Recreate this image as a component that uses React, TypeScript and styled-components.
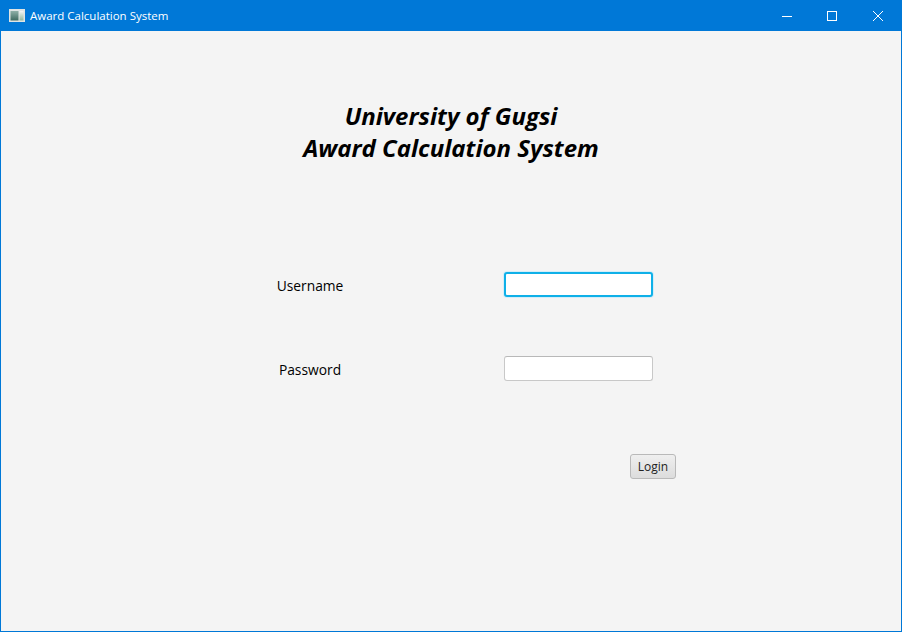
import React from "react";
import styled, { createGlobalStyle } from "styled-components";

const GlobalStyle = createGlobalStyle`
  html, body {
    margin: 0;
    padding: 0;
    height: 100%;
    overflow: hidden;
  }
  * {
    box-sizing: border-box;
  }
`;

const Window = styled.div`
  display: flex;
  flex-direction: column;
  width: 902px;
  height: 632px;
  border: 1px solid #0078d7;
  border-top: none;
  background-color: #f4f4f4;
  font-family: "Open Sans", "Noto Sans", sans-serif;
  color: #000;
`;

const TitleBar = styled.header`
  display: flex;
  align-items: center;
  height: 31px;
  margin: 0 -1px;
  padding: 0 1px 0 9px;
  background-color: #0078d7;
  color: #fff;
`;

const AppIcon = styled.svg`
  width: 16px;
  height: 13px;
  margin-right: 5px;
`;

const WindowTitle = styled.span`
  flex: 1;
  font-size: 11.5px;
  line-height: 31px;
`;

const WindowButton = styled.button`
  display: flex;
  align-items: center;
  justify-content: center;
  width: 46px;
  height: 31px;
  padding: 0;
  border: none;
  background: transparent;
  color: #fff;
`;

const Content = styled.main`
  flex: 1;
  display: flex;
  flex-direction: column;
`;

const Heading = styled.h1`
  margin: 69px 0 0;
  font-size: 24px;
  font-weight: 700;
  font-style: italic;
  line-height: 32px;
  text-align: center;
`;

const LoginForm = styled.form`
  display: grid;
  grid-template-columns: 100px 149px;
  column-gap: 144px;
  row-gap: 59px;
  margin-top: 108px;
  padding-left: 259px;
`;

const FieldLabel = styled.label`
  align-self: center;
  font-size: 13.8px;
  line-height: 25px;
  text-align: center;
  transform: translateY(1px);
`;

const TextField = styled.input<{ $focused?: boolean }>`
  display: block;
  width: 149px;
  height: 25px;
  padding: 0 7px;
  border-radius: 3px;
  border: ${(p) => (p.$focused ? "2px solid #0fb0e8" : "1px solid #c8c8c8")};
  border-top-color: ${(p) => (p.$focused ? "#0fb0e8" : "#b8b8b8")};
  box-shadow: ${(p) => (p.$focused ? "0 0 0 1px #d4edf8" : "none")};
  background-color: #fff;
  outline: none;
`;

const ActionRow = styled.div`
  grid-column: 1 / -1;
  display: flex;
  padding-left: 370px;
  margin-top: 14px;
`;

const LoginButton = styled.button`
  flex: none;
  width: 46px;
  height: 25px;
  padding: 0;
  border: 1px solid #b9b9b9;
  border-radius: 3px;
  background: linear-gradient(#efefef, #dcdcdc);
  color: #222;
  font-family: "Open Sans", "Noto Sans", sans-serif;
  font-size: 12px;
`;

export default function App() {
  return (
    <>
      <GlobalStyle />
      <Window>
        <TitleBar>
          <AppIcon viewBox="0 0 16 13">
            <defs>
              <linearGradient id="paneLeft" x1="0" y1="0" x2="0" y2="1">
                <stop offset="0" stopColor="#8fb0a8" />
                <stop offset="1" stopColor="#3f6a60" />
              </linearGradient>
              <linearGradient id="paneRight" x1="0" y1="0" x2="0" y2="1">
                <stop offset="0" stopColor="#f4f6f6" />
                <stop offset="1" stopColor="#8fb89c" />
              </linearGradient>
            </defs>
            <rect x="0" y="0" width="16" height="13" fill="#dfe4e4" />
            <rect x="1.5" y="2" width="8" height="9.5" fill="url(#paneLeft)" />
            <rect x="10.5" y="2" width="4" height="9.5" fill="url(#paneRight)" />
          </AppIcon>
          <WindowTitle>Award Calculation System</WindowTitle>
          <WindowButton type="button" aria-label="Minimize">
            <svg width="12" height="10" viewBox="0 0 12 10">
              <path d="M2 5.5h10" stroke="currentColor" strokeWidth="1" fill="none" />
            </svg>
          </WindowButton>
          <WindowButton type="button" aria-label="Maximize">
            <svg width="10" height="10" viewBox="0 0 10 10">
              <rect x="0.5" y="0.5" width="9" height="9" stroke="currentColor" strokeWidth="1" fill="none" />
            </svg>
          </WindowButton>
          <WindowButton type="button" aria-label="Close">
            <svg width="10" height="10" viewBox="0 0 10 10">
              <path d="M0 0l10 10M10 0L0 10" stroke="currentColor" strokeWidth="1" fill="none" />
            </svg>
          </WindowButton>
        </TitleBar>
        <Content>
          <Heading>
            University of Gugsi
            <br />
            Award Calculation System
          </Heading>
          <LoginForm onSubmit={(e) => e.preventDefault()}>
            <FieldLabel htmlFor="username">Username</FieldLabel>
            <TextField id="username" type="text" $focused />
            <FieldLabel htmlFor="password">Password</FieldLabel>
            <TextField id="password" type="password" />
            <ActionRow>
              <LoginButton type="submit">Login</LoginButton>
            </ActionRow>
          </LoginForm>
        </Content>
      </Window>
    </>
  );
}
